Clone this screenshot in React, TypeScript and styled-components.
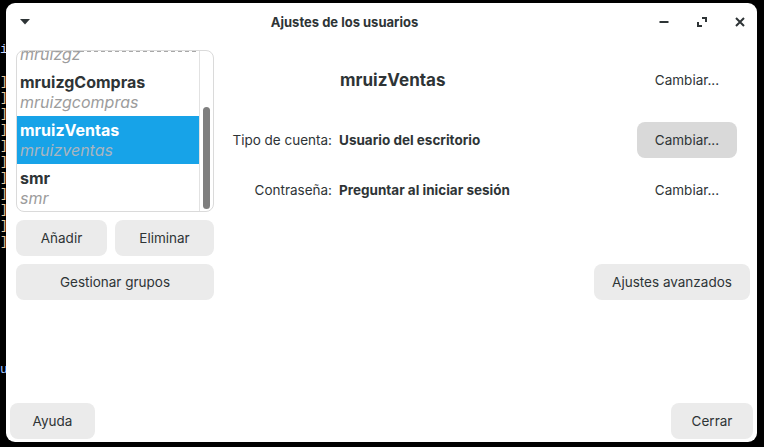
import React from "react";
import styled, { createGlobalStyle } from "styled-components";

const GlobalStyle = createGlobalStyle`
  html, body { margin: 0; padding: 0; background: #000; }
  body { font-family: Inter, "Noto Sans", sans-serif; color: #2e3436; }
  * { box-sizing: border-box; }
`;

const Page = styled.div`
  display: flex;
  width: 764px;
  height: 447px;
  overflow: hidden;
  background: #000;
`;

const Term = styled.div`
  width: 6px;
  flex: none;
  overflow: hidden;
  padding-top: 42px;
  font-family: "Liberation Mono", monospace;
  font-size: 13px;
  line-height: 16px;
`;

const TermLine = styled.div<{ $c?: string }>`
  height: 16px;
  white-space: pre;
  color: ${(p) => p.$c || "#dddddd"};
`;

const Window = styled.div`
  margin: 3px 6px 5px 0;
  width: 751px;
  height: 439px;
  background: #fff;
  border-radius: 9px;
  display: flex;
  flex-direction: column;
  overflow: hidden;
`;

const TitleBar = styled.div`
  height: 37px;
  flex: none;
  display: grid;
  grid-template-columns: 46px 1fr 120px;
  align-items: center;
`;

const IconButton = styled.div<{ $ml?: number }>`
  width: 24px;
  height: 24px;
  display: flex;
  align-items: center;
  justify-content: center;
  margin-left: ${(p) => p.$ml ?? 0}px;
  color: #2e3436;
`;

const Title = styled.div`
  text-align: center;
  font-weight: 700;
  font-size: 13px;
  color: #2e3436;
`;

const Controls = styled.div`
  display: flex;
  justify-content: flex-end;
  gap: 14px;
  padding-right: 5px;
`;

const Body = styled.div`
  flex: 1;
  display: flex;
`;

const LeftColumn = styled.div`
  width: 208px;
  flex: none;
  padding: 10px 0 0 10px;
  display: flex;
  flex-direction: column;
`;

const ListFrame = styled.div`
  height: 162px;
  border: 1px solid #dadada;
  border-radius: 8px;
  overflow: hidden;
  display: flex;
`;

const ListScroll = styled.div`
  flex: 1;
  overflow: hidden;
  position: relative;
  &::before {
    content: "";
    position: absolute;
    left: 0;
    right: 0;
    top: 0;
    height: 1px;
    background-image: repeating-linear-gradient(
      to right,
      #a8a8a8 0 4px,
      transparent 4px 7px
    );
    z-index: 2;
  }
`;

const Rows = styled.div`
  margin-top: -31px;
`;

const Row = styled.div<{ $selected?: boolean }>`
  height: 48px;
  padding: 4px 0 0 3px;
  background: ${(p) => (p.$selected ? "#17a3e8" : "transparent")};
`;

const RowName = styled.div<{ $selected?: boolean }>`
  font-size: 16px;
  line-height: 20px;
  font-weight: 700;
  color: ${(p) => (p.$selected ? "#ffffff" : "#2e3436")};
`;

const RowSub = styled.div<{ $selected?: boolean }>`
  font-size: 16px;
  line-height: 20px;
  font-style: italic;
  color: ${(p) => (p.$selected ? "#a9b5bf" : "#9c9c9c")};
`;

const ScrollTrack = styled.div`
  width: 14px;
  flex: none;
  border-left: 1px solid #e2e2e2;
  padding: 56px 0 0 3px;
`;

const ScrollThumb = styled.div`
  width: 7px;
  height: 102px;
  border-radius: 4px;
  background: #7f7f7f;
`;

const ButtonRow = styled.div`
  display: flex;
  gap: 8px;
  margin-top: 8px;
`;

const Button = styled.div<{ $w?: number; $hover?: boolean; $flat?: boolean }>`
  height: 36px;
  width: ${(p) => (p.$w ? `${p.$w}px` : "auto")};
  border-radius: 8px;
  background: ${(p) => (p.$flat ? "transparent" : p.$hover ? "#d9d9d9" : "#ebebeb")};
  display: flex;
  align-items: center;
  justify-content: center;
  font-size: 13.5px;
  color: #2e3436;
  flex: none;
`;

const WideButton = styled(Button)`
  margin-top: 8px;
  width: 198px;
`;

const RightPanel = styled.div`
  flex: 1;
  padding: 22px 7px 0 8px;
  display: flex;
  flex-direction: column;
`;

const InfoGrid = styled.div`
  display: grid;
  grid-template-columns: 110px 1fr 100px;
  column-gap: 7px;
  row-gap: 14px;
  margin-right: 13px;
  align-items: center;
`;

const HeaderName = styled.div`
  grid-column: 2;
  font-size: 17px;
  font-weight: 700;
  color: #2e3436;
  padding-left: 1px;
  margin-bottom: 10px;
`;

const HeaderAction = styled.div`
  grid-column: 3;
  margin-bottom: 10px;
`;

const Label = styled.div`
  grid-column: 1;
  text-align: right;
  font-size: 13.5px;
  color: #2e3436;
  white-space: nowrap;
`;

const Value = styled.div`
  grid-column: 2;
  font-size: 13.5px;
  font-weight: 700;
  color: #2e3436;
  white-space: nowrap;
`;

const AdvancedRow = styled.div`
  display: flex;
  justify-content: flex-end;
  margin-top: 56px;
`;

const Footer = styled.div`
  display: flex;
  justify-content: space-between;
  padding: 0 4px 3px 4px;
`;

const users = [
  { name: "mruizgz", sub: "mruizgz" },
  { name: "mruizgCompras", sub: "mruizgcompras" },
  { name: "mruizVentas", sub: "mruizventas", selected: true },
  { name: "smr", sub: "smr" },
];

const termLines: { t: string; c?: string }[] = [
  { t: "i", c: "#c9d4ff" },
  { t: "" },
  ...Array.from({ length: 11 }, () => ({ t: "]", c: "#e6c9a0" })),
  ...Array.from({ length: 7 }, () => ({ t: "" })),
  { t: "u", c: "#9fc3ff" },
];

export default function App() {
  return (
    <>
      <GlobalStyle />
      <Page>
        <Term>
          {termLines.map((l, i) => (
            <TermLine key={i} $c={l.c}>
              {l.t}
            </TermLine>
          ))}
        </Term>
        <Window>
          <TitleBar>
            <IconButton $ml={7}>
              <svg width="10" height="6" viewBox="0 0 10 6">
                <polygon points="0,0 10,0 5,5.5" fill="#2e3436" />
              </svg>
            </IconButton>
            <Title>Ajustes de los usuarios</Title>
            <Controls>
              <IconButton>
                <svg width="10" height="10" viewBox="0 0 10 10">
                  <rect x="0.5" y="4" width="9" height="2" fill="#2e3436" />
                </svg>
              </IconButton>
              <IconButton>
                <svg width="10" height="10" viewBox="0 0 10 10">
                  <path d="M5 1H9V5" stroke="#2e3436" strokeWidth="2" fill="none" />
                  <path d="M1 5V9H5" stroke="#2e3436" strokeWidth="2" fill="none" />
                </svg>
              </IconButton>
              <IconButton>
                <svg width="10" height="10" viewBox="0 0 10 10">
                  <path d="M1 1L9 9M9 1L1 9" stroke="#2e3436" strokeWidth="2" />
                </svg>
              </IconButton>
            </Controls>
          </TitleBar>
          <Body>
            <LeftColumn>
              <ListFrame>
                <ListScroll>
                  <Rows>
                    {users.map((u) => (
                      <Row key={u.name} $selected={u.selected}>
                        <RowName $selected={u.selected}>{u.name}</RowName>
                        <RowSub $selected={u.selected}>{u.sub}</RowSub>
                      </Row>
                    ))}
                  </Rows>
                </ListScroll>
                <ScrollTrack>
                  <ScrollThumb />
                </ScrollTrack>
              </ListFrame>
              <ButtonRow>
                <Button $w={91}>Añadir</Button>
                <Button $w={99}>Eliminar</Button>
              </ButtonRow>
              <WideButton>Gestionar grupos</WideButton>
            </LeftColumn>
            <RightPanel>
              <InfoGrid>
                <HeaderName>mruizVentas</HeaderName>
                <HeaderAction>
                  <Button $flat>Cambiar...</Button>
                </HeaderAction>
                <Label>Tipo de cuenta:</Label>
                <Value>Usuario del escritorio</Value>
                <Button $hover>Cambiar...</Button>
                <Label>Contraseña:</Label>
                <Value>Preguntar al iniciar sesión</Value>
                <Button $flat>Cambiar...</Button>
              </InfoGrid>
              <AdvancedRow>
                <Button $w={156}>Ajustes avanzados</Button>
              </AdvancedRow>
            </RightPanel>
          </Body>
          <Footer>
            <Button $w={85}>Ayuda</Button>
            <Button $w={82}>Cerrar</Button>
          </Footer>
        </Window>
      </Page>
    </>
  );
}
